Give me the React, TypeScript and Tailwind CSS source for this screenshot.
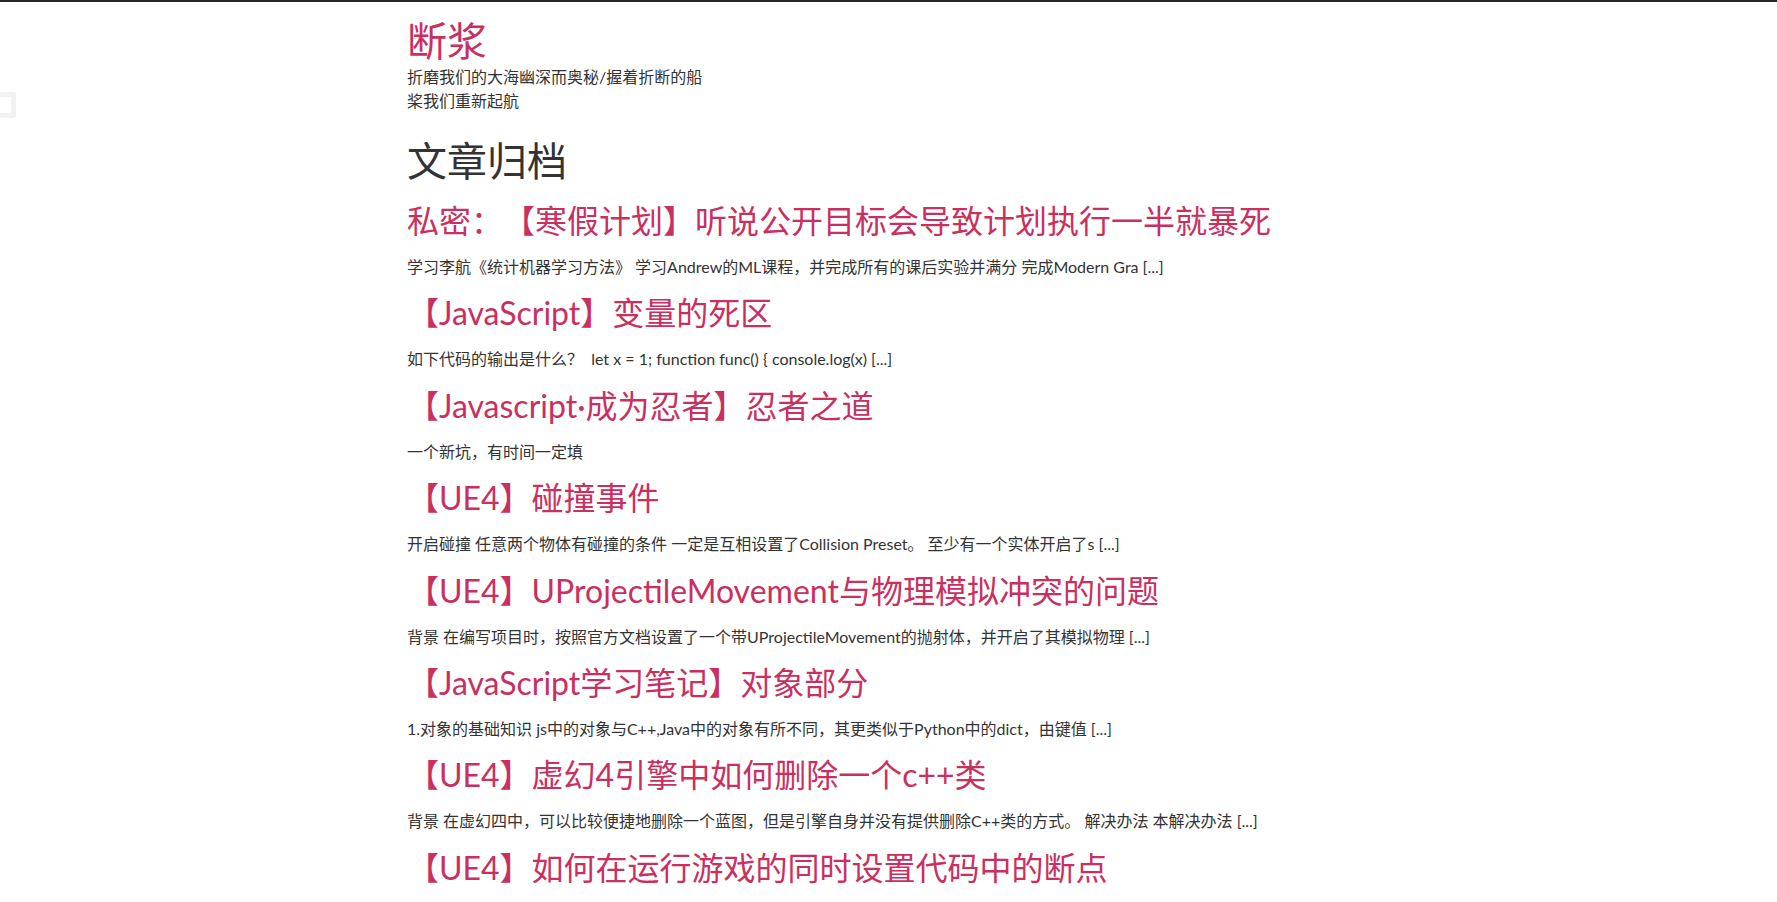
import React from "react";

const posts = [
  {
    title: "私密：【寒假计划】听说公开目标会导致计划执行一半就暴死",
    excerpt:
      "学习李航《统计机器学习方法》 学习Andrew的ML课程，并完成所有的课后实验并满分 完成Modern Gra [...]",
  },
  {
    title: "【JavaScript】变量的死区",
    excerpt: "如下代码的输出是什么？  let x = 1; function func() { console.log(x) [...]",
  },
  {
    title: "【Javascript·成为忍者】忍者之道",
    excerpt: "一个新坑，有时间一定填",
  },
  {
    title: "【UE4】碰撞事件",
    excerpt:
      "开启碰撞 任意两个物体有碰撞的条件 一定是互相设置了Collision Preset。 至少有一个实体开启了s [...]",
  },
  {
    title: "【UE4】UProjectileMovement与物理模拟冲突的问题",
    excerpt:
      "背景 在编写项目时，按照官方文档设置了一个带UProjectileMovement的抛射体，并开启了其模拟物理 [...]",
  },
  {
    title: "【JavaScript学习笔记】对象部分",
    excerpt:
      "1.对象的基础知识 js中的对象与C++,Java中的对象有所不同，其更类似于Python中的dict，由键值 [...]",
  },
  {
    title: "【UE4】虚幻4引擎中如何删除一个c++类",
    excerpt:
      "背景 在虚幻四中，可以比较便捷地删除一个蓝图，但是引擎自身并没有提供删除C++类的方式。 解决办法 本解决办法 [...]",
  },
  {
    title: "【UE4】如何在运行游戏的同时设置代码中的断点",
    excerpt: "",
  },
];

const App = () => {
  return (
    <div className="relative min-h-screen overflow-hidden bg-white border-t-2 border-[#23272a] text-[#333] font-[Lato,'Noto_Sans_CJK_SC',sans-serif] [text-spacing-trim:space-all]">
      {/* sidebar toggle peeking from the left edge */}
      <div className="absolute left-0 top-[90px] w-[16px] h-[26px] border-[5px] border-l-0 border-[#f2f2f2] rounded-r-[3px]" />

      <div className="mx-auto w-[963px] pt-[18px]">
        <header>
          <a href="#" className="block text-[40px] leading-[42px] text-[#c9305f]">
            断浆
          </a>
          <p className="mt-[3px] w-[300px] text-[16px] leading-[24px]">
            折磨我们的大海幽深而奥秘/握着折断的船桨我们重新起航
          </p>
        </header>

        <main className="mt-[24px]">
          <h1 className="text-[40px] leading-[48px] text-[#333]">文章归档</h1>
          <div className="mt-[16px] flex flex-col gap-[14.4px]">
            {posts.map((p) => (
              <article key={p.title}>
                <h2 className="text-[32px] leading-[40px] text-[#c9305f] whitespace-nowrap">
                  <a href="#">{p.title}</a>
                </h2>
                {p.excerpt && (
                  <p className="mt-[14px] text-[16px] leading-[24px] text-[#333] whitespace-pre">
                    {p.excerpt}
                  </p>
                )}
              </article>
            ))}
          </div>
        </main>
      </div>
    </div>
  );
};

export default App;
